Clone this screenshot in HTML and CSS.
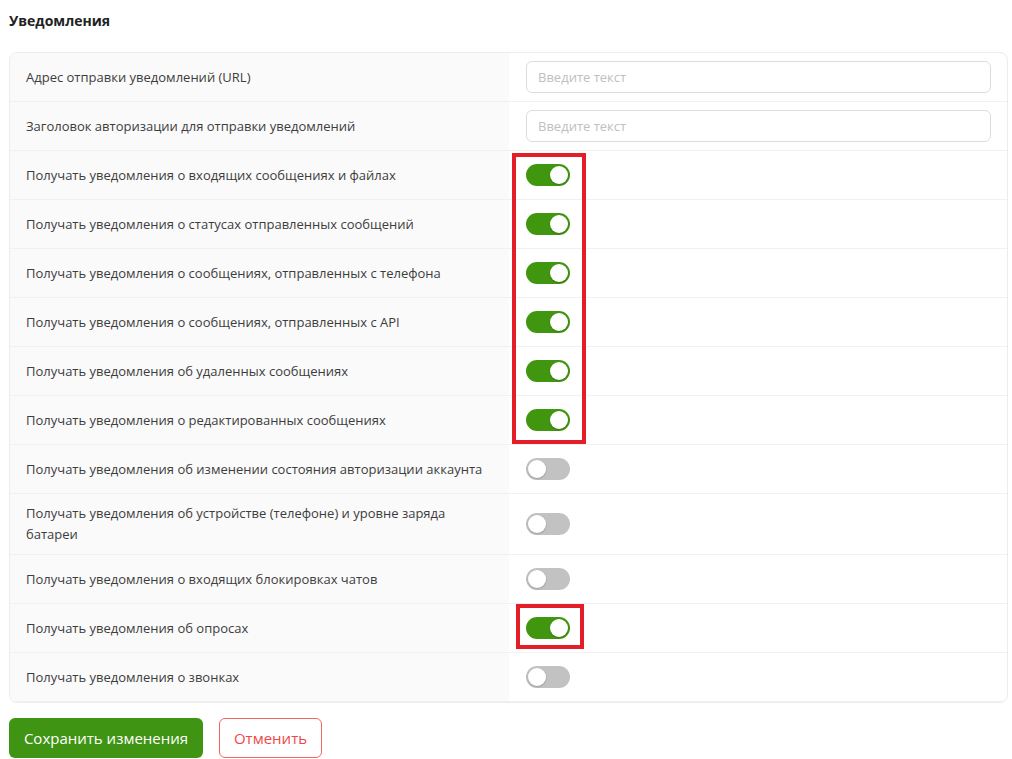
FILE: index.html
```html
<!DOCTYPE html>
<html lang="ru">
<head>
  <meta charset="UTF-8">
  <meta name="viewport" content="width=device-width, initial-scale=1.0">
  <link rel="stylesheet" href="styles.css">
</head>
<body>

<div class="page">
  <h2 class="title">Уведомления</h2>

  <div class="card">
    <div class="row">
      <div class="row-label">Адрес отправки уведомлений (URL)</div>
      <div class="row-value"><input type="text" class="text-input" placeholder="Введите текст"></div>
    </div>
    <div class="row">
      <div class="row-label">Заголовок авторизации для отправки уведомлений</div>
      <div class="row-value"><input type="text" class="text-input" placeholder="Введите текст"></div>
    </div>
    <div class="row">
      <div class="row-label">Получать уведомления о входящих сообщениях и файлах</div>
      <div class="row-value"><span class="switch on"></span></div>
    </div>
    <div class="row">
      <div class="row-label">Получать уведомления о статусах отправленных сообщений</div>
      <div class="row-value"><span class="switch on"></span></div>
    </div>
    <div class="row">
      <div class="row-label">Получать уведомления о сообщениях, отправленных с телефона</div>
      <div class="row-value"><span class="switch on"></span></div>
    </div>
    <div class="row">
      <div class="row-label">Получать уведомления о сообщениях, отправленных с API</div>
      <div class="row-value"><span class="switch on"></span></div>
    </div>
    <div class="row">
      <div class="row-label">Получать уведомления об удаленных сообщениях</div>
      <div class="row-value"><span class="switch on"></span></div>
    </div>
    <div class="row">
      <div class="row-label">Получать уведомления о редактированных сообщениях</div>
      <div class="row-value"><span class="switch on"></span></div>
    </div>
    <div class="row">
      <div class="row-label">Получать уведомления об изменении состояния авторизации аккаунта</div>
      <div class="row-value"><span class="switch"></span></div>
    </div>
    <div class="row">
      <div class="row-label tall">Получать уведомления об устройстве (телефоне) и уровне заряда батареи</div>
      <div class="row-value"><span class="switch"></span></div>
    </div>
    <div class="row">
      <div class="row-label">Получать уведомления о входящих блокировках чатов</div>
      <div class="row-value"><span class="switch"></span></div>
    </div>
    <div class="row">
      <div class="row-label">Получать уведомления об опросах</div>
      <div class="row-value"><span class="switch on"></span></div>
    </div>
    <div class="row">
      <div class="row-label">Получать уведомления о звонках</div>
      <div class="row-value"><span class="switch"></span></div>
    </div>

    <!-- marker frames over the switch column -->
    <div class="mark mark-group"></div>
    <div class="mark mark-single"></div>
  </div>

  <div class="actions">
    <button type="submit" class="btn btn-save">Сохранить изменения</button>
    <button type="reset" class="btn btn-cancel">Отменить</button>
  </div>
</div>

</body>
</html>
```

FILE: styles.css
```css
body {
  margin: 0;
  font-family: "Open Sans", "Noto Sans", Arial, sans-serif;
  color: #333;
  background: #fff;
}

.page {
  padding: 0 4px 0 9px;
}

.title {
  margin: 0;
  padding: 10px 0 20px;
  font-size: 14px;
  line-height: 22px;
  font-weight: 700;
  color: #222;
}

.card {
  position: relative;
  border: 1px solid #ececec;
  border-radius: 8px;
  overflow: hidden;
}

.row {
  display: grid;
  grid-template-columns: 499px 1fr;
  border-bottom: 1px solid #f1f1f1;
}

.row:last-of-type {
  border-bottom: none;
}

.row-label {
  display: flex;
  align-items: center;
  min-height: 48px;
  padding: 0 16px;
  box-sizing: border-box;
  background: #fafafa;
  font-size: 13px;
  line-height: 21px;
  color: #3d3d3d;
}

.row-label.tall {
  padding: 9px 60px 9px 16px;
}

.row-value {
  display: flex;
  align-items: center;
  padding: 8px 16px 8px 17px;
}

.text-input {
  width: 100%;
  height: 32px;
  box-sizing: border-box;
  padding: 0 11px;
  border: 1px solid #dcdcdc;
  border-radius: 6px;
  font-family: inherit;
  font-size: 13px;
  color: #333;
  outline: none;
}

.text-input::placeholder {
  color: #c0c0c0;
}

.switch {
  position: relative;
  display: inline-block;
  width: 44px;
  height: 22px;
  border-radius: 11px;
  background: #c2c2c2;
}

.switch::after {
  content: "";
  position: absolute;
  top: 2px;
  left: 2px;
  width: 18px;
  height: 18px;
  border-radius: 50%;
  background: #fff;
  box-shadow: 0 1px 2px rgba(0, 0, 0, 0.2);
}

.switch.on {
  background: #41960f;
}

.switch.on::after {
  left: 24px;
}

.mark {
  position: absolute;
  border: 4px solid #e41e26;
  box-sizing: border-box;
}

.mark-group {
  left: 502px;
  top: 100px;
  width: 74px;
  height: 291px;
}

.mark-single {
  left: 506px;
  top: 551px;
  width: 68px;
  height: 45px;
}

.actions {
  display: flex;
  gap: 16px;
  padding-top: 15px;
}

.btn {
  height: 40px;
  padding: 0;
  border-radius: 6px;
  font-family: inherit;
  font-size: 15px;
  white-space: nowrap;
  cursor: pointer;
}

.btn-save {
  width: 194px;
  background: #3f9413;
  border: none;
  color: #fff;
}

.btn-cancel {
  width: 103px;
  background: #fff;
  border: 1px solid #f36464;
  color: #f04848;
}
```
